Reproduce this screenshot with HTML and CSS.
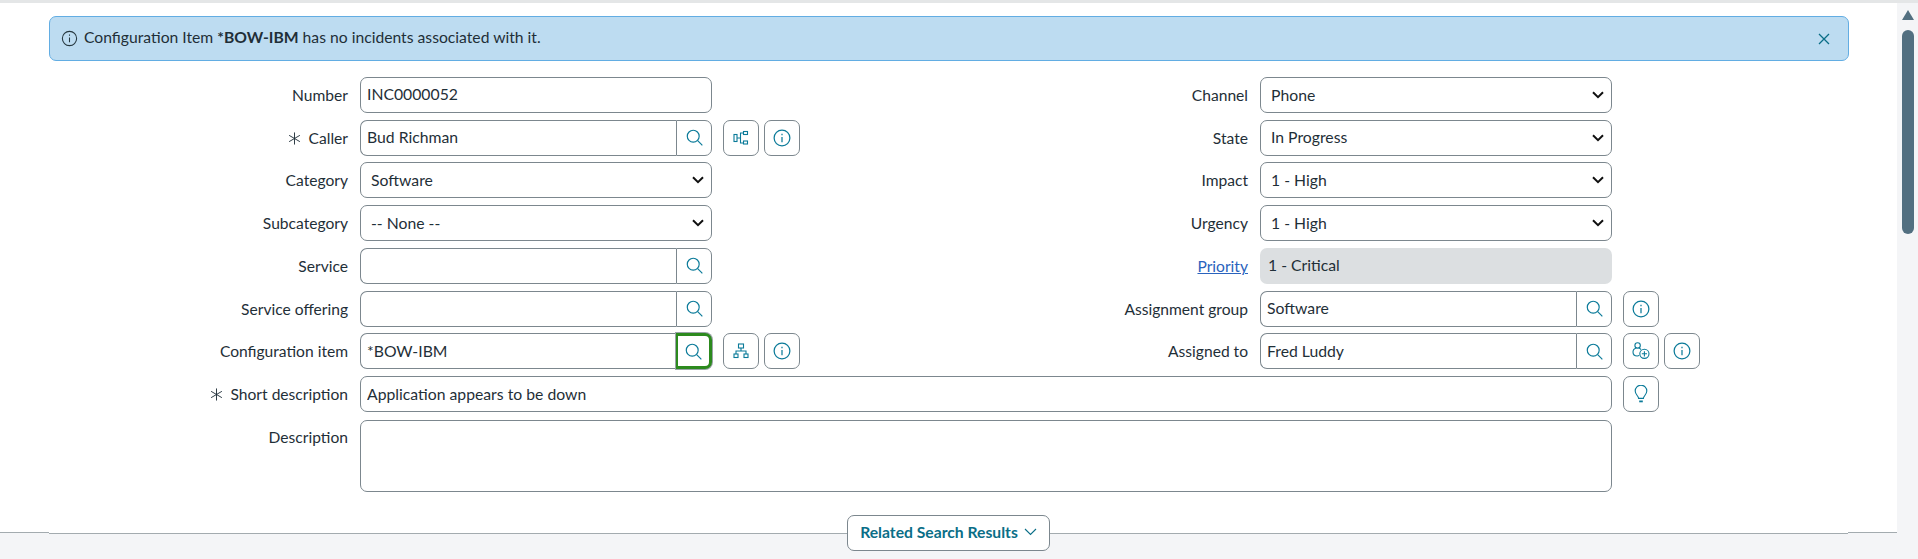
FILE: index.html
```html
<!DOCTYPE html>
<html lang="en">
<head>
  <meta charset="UTF-8">
  <title>INC0000052</title>
  <link rel="stylesheet" href="styles.css">
</head>
<body>
  <div class="topstrip"></div>
  <div class="page">
    <main class="main">
      <div class="form-area">
        <div class="banner">
          <svg class="banner-icon" viewBox="0 0 16 16"><circle cx="8" cy="8" r="6.7"/><path d="M8 7v4.6M8 4.2v1.2"/></svg>
          <span class="banner-text">Configuration Item <b>*BOW-IBM</b> has no incidents associated with it.</span>
          <svg class="banner-close" viewBox="0 0 12 12"><path d="M1 1l10 10M11 1L1 11"/></svg>
        </div>

        <div class="columns">
          <div class="column">
            <div class="row">
              <label class="label">Number</label>
              <input class="input input-first" value="INC0000052">
            </div>
            <div class="row">
              <label class="label"><svg class="req" viewBox="0 0 14 14"><path d="M7 .5v13M1.2 3.6l11.6 6.8M12.8 3.6L1.2 10.4"/></svg>Caller</label>
              <div class="lookup">
                <input class="input" value="Bud Richman">
                <button class="lookup-btn"><svg class="icon search" viewBox="0 0 16 16"><circle cx="6.8" cy="6.8" r="5.6"/><path d="M11 11l4.4 4.4"/></svg></button>
              </div>
              <div class="actions">
                <button class="action"><svg class="icon" viewBox="0 0 16 16"><rect x="1" y="4.5" width="3" height="7"/><rect x="10.5" y="1.5" width="4" height="3"/><rect x="10.5" y="11" width="4" height="3"/><path d="M4 8h3.5M10.5 3H7.5v10h3"/></svg></button>
                <button class="action"><svg class="icon info" viewBox="0 0 16 16"><circle cx="8" cy="8" r="7"/><path d="M8 7v4.8M8 4.2v1.3"/></svg></button>
              </div>
            </div>
            <div class="row">
              <label class="label">Category</label>
              <select class="select"><option>Software</option></select>
            </div>
            <div class="row">
              <label class="label">Subcategory</label>
              <select class="select"><option>-- None --</option></select>
            </div>
            <div class="row">
              <label class="label">Service</label>
              <div class="lookup">
                <input class="input">
                <button class="lookup-btn"><svg class="icon search" viewBox="0 0 16 16"><circle cx="6.8" cy="6.8" r="5.6"/><path d="M11 11l4.4 4.4"/></svg></button>
              </div>
            </div>
            <div class="row">
              <label class="label">Service offering</label>
              <div class="lookup">
                <input class="input">
                <button class="lookup-btn"><svg class="icon search" viewBox="0 0 16 16"><circle cx="6.8" cy="6.8" r="5.6"/><path d="M11 11l4.4 4.4"/></svg></button>
              </div>
            </div>
            <div class="row">
              <label class="label">Configuration item</label>
              <div class="lookup">
                <input class="input" value="*BOW-IBM">
                <button class="lookup-btn focused"><svg class="icon search" viewBox="0 0 16 16"><circle cx="6.8" cy="6.8" r="5.6"/><path d="M11 11l4.4 4.4"/></svg></button>
              </div>
              <div class="actions">
                <button class="action"><svg class="icon" viewBox="0 0 16 16"><rect x="5.5" y="1" width="5" height="4"/><rect x="1" y="11" width="4" height="3.5"/><rect x="11" y="11" width="4" height="3.5"/><path d="M8 5v3M3 11V8h10v3"/></svg></button>
                <button class="action"><svg class="icon info" viewBox="0 0 16 16"><circle cx="8" cy="8" r="7"/><path d="M8 7v4.8M8 4.2v1.3"/></svg></button>
              </div>
            </div>
          </div>

          <div class="column">
            <div class="row">
              <label class="label">Channel</label>
              <select class="select"><option>Phone</option></select>
            </div>
            <div class="row">
              <label class="label">State</label>
              <select class="select"><option>In Progress</option></select>
            </div>
            <div class="row">
              <label class="label">Impact</label>
              <select class="select"><option>1 - High</option></select>
            </div>
            <div class="row">
              <label class="label">Urgency</label>
              <select class="select"><option>1 - High</option></select>
            </div>
            <div class="row">
              <label class="label"><a class="link" href="#">Priority</a></label>
              <div class="readonly">1 - Critical</div>
            </div>
            <div class="row">
              <label class="label">Assignment group</label>
              <div class="lookup">
                <input class="input" value="Software">
                <button class="lookup-btn"><svg class="icon search" viewBox="0 0 16 16"><circle cx="6.8" cy="6.8" r="5.6"/><path d="M11 11l4.4 4.4"/></svg></button>
              </div>
              <div class="actions">
                <button class="action"><svg class="icon info" viewBox="0 0 16 16"><circle cx="8" cy="8" r="7"/><path d="M8 7v4.8M8 4.2v1.3"/></svg></button>
              </div>
            </div>
            <div class="row">
              <label class="label">Assigned to</label>
              <div class="lookup">
                <input class="input" value="Fred Luddy">
                <button class="lookup-btn"><svg class="icon search" viewBox="0 0 16 16"><circle cx="6.8" cy="6.8" r="5.6"/><path d="M11 11l4.4 4.4"/></svg></button>
              </div>
              <div class="actions">
                <button class="action"><svg class="icon person" viewBox="0 0 18 18"><circle cx="5.6" cy="3.4" r="2.7"/><path d="M4.4 6C2 6.6 1 8.2 1 10c0 2.4 1.9 4 4.2 4 .8 0 1.5-.2 2-.4M6.8 6c1 .3 1.8.9 2.3 1.6"/><circle cx="12.4" cy="11.8" r="4.6"/><path d="M12.4 9.2v5.2M9.8 11.8H15"/></svg></button>
                <button class="action"><svg class="icon info" viewBox="0 0 16 16"><circle cx="8" cy="8" r="7"/><path d="M8 7v4.8M8 4.2v1.3"/></svg></button>
              </div>
            </div>
          </div>
        </div>

        <div class="row row-wide">
          <label class="label"><svg class="req" viewBox="0 0 14 14"><path d="M7 .5v13M1.2 3.6l11.6 6.8M12.8 3.6L1.2 10.4"/></svg>Short description</label>
          <input class="input" value="Application appears to be down">
          <div class="actions">
            <button class="action"><svg class="icon bulb" viewBox="0 0 16 18"><path d="M5.6 13.4c0-2.4-3.4-3.8-3.4-7.4a5.8 5.8 0 0 1 11.6 0c0 3.6-3.4 5-3.4 7.4z"/><path class="thick" d="M6.2 16.4h3.6"/></svg></button>
          </div>
        </div>
        <div class="row row-wide row-desc">
          <label class="label">Description</label>
          <textarea class="textarea"></textarea>
        </div>
      </div>

      <div class="related">
        <div class="related-edge"></div>
        <div class="related-line"></div>
        <button class="related-btn">Related Search Results<svg class="chevron" viewBox="0 0 13 8"><path d="M1 1l5.5 5.5L12 1"/></svg></button>
        <div class="related-line"></div>
        <div class="related-edge"></div>
      </div>
      <div class="under"></div>
    </main>

    <div class="scrollbar">
      <div class="scroll-arrow"></div>
      <div class="scroll-thumb"></div>
    </div>
  </div>
</body>
</html>
```

FILE: styles.css
```css
html, body { margin: 0; height: 100%; overflow: hidden; }
body { font-family: Lato, "Liberation Sans", sans-serif; font-size: 15.6px; color: #1f2f38; background: #fff; display: flex; flex-direction: column; }
.topstrip { height: 3px; background: #e4e6e7; }
.page { flex: 1; display: flex; min-height: 0; }
.main { flex: 1; display: flex; flex-direction: column; min-width: 0; }
.form-area { height: 512px; padding: 13px 48px 0 49px; box-sizing: border-box; }

.banner { display: flex; align-items: center; height: 45px; box-sizing: border-box; padding: 0 18px 0 11px; background: #bddcf1; border: 1px solid #62ade3; border-radius: 7px; }
.banner-icon { width: 17px; height: 17px; margin-right: 6px; fill: none; stroke: #26373f; stroke-width: 1; }
.banner-text { flex: 1; font-size: 15.7px; padding-bottom: 3px; }
.banner-close { width: 12px; height: 12px; fill: none; stroke: #0a6e87; stroke-width: 1.3; }

.columns { display: flex; margin-top: 16px; }
.column { width: 900px; }
.row { display: grid; grid-template-columns: 299px 352px auto; column-gap: 12px; align-items: center; height: 36px; margin-bottom: 6.72px; }
.row-wide { grid-template-columns: 299px 1252px auto; }
.row-desc { height: 72px; align-items: start; margin-top: 7.7px; }
.row-desc .label { padding-top: 8px; }

.label { text-align: right; white-space: nowrap; }
.req { width: 13px; height: 13px; margin-right: 8px; vertical-align: -1px; fill: none; stroke: #1f2f38; stroke-width: 1; }
.link { color: #2a63bd; }

.input, .select, .textarea { width: 100%; height: 36px; box-sizing: border-box; font: inherit; font-size: 15.75px; color: inherit; background: #fff; border: 1px solid #7c878e; border-radius: 7px; padding: 0 6px 2px; outline: none; }
.input-first { padding-bottom: 4px; }
.select { padding: 0 24px 2px 10px; appearance: none; background: #fff url("data:image/svg+xml,%3Csvg xmlns='http://www.w3.org/2000/svg' viewBox='0 0 12 8'%3E%3Cpath d='M1 1.2l5 5 5-5' fill='none' stroke='%23111' stroke-width='2'/%3E%3C/svg%3E") no-repeat right 7px center / 12px 8px; }
.textarea { height: 72px; resize: none; display: block; }
.readonly { height: 36px; line-height: 34px; font-size: 15.75px; box-sizing: border-box; padding: 0 8px 2px; background: #dcdfe1; border-radius: 7px; }

.lookup { display: flex; }
.lookup .input { flex: 1; min-width: 0; border-radius: 7px 0 0 7px; border-right: 0; }
.lookup-btn { width: 36px; height: 36px; flex: none; padding: 0; display: flex; align-items: center; justify-content: center; background: #fff; border: 1px solid #7c878e; border-radius: 0 7px 7px 0; }
.lookup-btn.focused { border: 3px solid #2c8a1e; border-left-width: 2px; box-shadow: 0 0 0 1px #9aa3a8; }

.actions { display: flex; gap: 5px; margin-left: -1px; }
.action { width: 36px; height: 36px; padding: 0; display: flex; align-items: center; justify-content: center; background: #fff; border: 1px solid #7c878e; border-radius: 7px; }
.icon { width: 16px; height: 16px; fill: none; stroke: #0a7a99; stroke-width: 1.1; }
.icon.search { width: 17px; height: 17px; }
.icon.info { width: 18px; height: 18px; }
.icon.person { width: 18px; height: 18px; }
.icon.bulb { width: 16px; height: 18px; }
.icon .thick { stroke-width: 1.8; }

.related { display: flex; align-items: center; height: 36px; background: linear-gradient(#fff 50%, #f4f5f7 50%); flex: none; }
.related-line { flex: 1; height: 1px; background: #a3abaf; margin-top: 1px; }
.related-edge { width: 49px; flex: none; height: 1px; background: #a3abaf; margin-bottom: 1px; }
.related-btn { width: 203px; height: 36px; flex: none; display: flex; align-items: center; justify-content: center; gap: 6px; padding: 0 0 3px; font: inherit; font-size: 15.7px; font-weight: 700; color: #0a6e87; background: #fff; border: 1px solid #7c878e; border-radius: 7px; }
.chevron { width: 13px; height: 8px; fill: none; stroke: #0a6e87; stroke-width: 1.1; }
.under { flex: 1; background: #f4f5f7; }

.scrollbar { width: 21px; flex: none; background: #f4f5f7; display: flex; flex-direction: column; align-items: center; padding-top: 7px; box-sizing: border-box; }
.scroll-arrow { width: 0; height: 0; border-left: 6px solid transparent; border-right: 6px solid transparent; border-bottom: 10px solid #526f80; }
.scroll-thumb { width: 12px; height: 204px; margin-top: 10px; background: #526f80; border-radius: 6px; }
```
